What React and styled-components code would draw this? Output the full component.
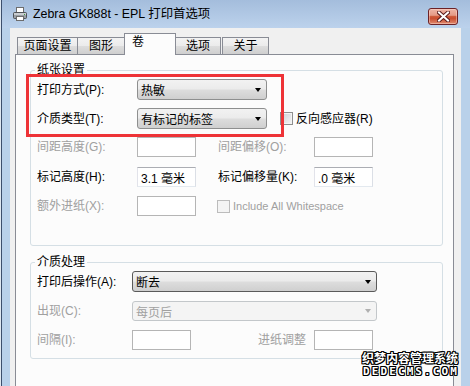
import React from "react";
import styled, { createGlobalStyle, css } from "styled-components";

const Global = createGlobalStyle`
  html, body { margin: 0; padding: 0; background: #ffffff; }
  body { font-family: "Liberation Sans", "Noto Sans CJK SC", sans-serif; font-size: 12px; }
  * { box-sizing: border-box; }
`;

const PANEL_BG = "#fcfcfc";
const FONT = `"Liberation Sans", "Noto Sans CJK SC", sans-serif`;

const Window = styled.div`
  position: relative;
  width: 470px;
  height: 386px;
  padding-left: 1px;
  background: #dfe8f2;
  overflow: hidden;
`;

const Frame = styled.div`
  height: 100%;
  border-left: 1px solid #3d4f6c;
  display: flex;
  flex-direction: column;
  background: linear-gradient(to bottom, #a4bddc 0px, #bcd2ec 28px, #b9d1ea 28px, #b9d1ea 100%);
`;

const TitleBar = styled.div`
  height: 28px;
  flex: none;
  display: flex;
  align-items: center;
  padding-left: 10px;
`;

const TitleText = styled.span`
  margin-left: 5px;
  font-family: ${FONT};
  font-size: 12.4px;
  color: #000;
  line-height: 16px;
`;

const CloseButton = styled.div`
  margin-left: auto;
  margin-right: 12px;
  align-self: flex-start;
  margin-top: 8px;
  width: 30px;
  height: 17px;
  border: 1px solid #6c2227;
  border-radius: 3px;
  background: linear-gradient(
    to bottom,
    #eeb5a6 0%,
    #e59a86 42%,
    #cf5b3b 50%,
    #c94d2f 62%,
    #df8a6f 100%
  );
  display: flex;
  align-items: center;
  justify-content: center;
  box-shadow: inset 0 0 0 1px rgba(255, 220, 210, 0.45);
`;

const Client = styled.div`
  flex: 1;
  margin: 0 9px 0 8px;
  background: #f0f0f0;
  padding: 5px 7px 0 5px;
  display: flex;
  flex-direction: column;
  min-height: 0;
  overflow: hidden;
`;

const TabRow = styled.div`
  height: 22px;
  flex: none;
  display: flex;
  align-items: flex-end;
  padding-left: 2px;
  margin-bottom: -1px;
  position: relative;
  z-index: 1;
`;

const Tab = styled.div`
  flex: none;
  width: ${(p) => p.$w}px;
  margin-left: ${(p) => p.$ml || 0}px;
  font-family: ${FONT};
  font-size: 12px;
  color: #000;
  text-align: center;
  border: 1px solid #898c95;
  border-bottom: none;
  ${(p) =>
    p.$active
      ? css`
          height: 22px;
          background: ${PANEL_BG};
          line-height: 17px;
          position: relative;
          z-index: 2;
          text-align: left;
          padding-left: 7px;
        `
      : css`
          height: 17px;
          margin-bottom: 1px;
          line-height: 17px;
          background: linear-gradient(to bottom, #f3f3f3 0%, #ebebeb 50%, #dddddd 51%, #cfcfcf 100%);
        `}
`;

const Panel = styled.div`
  flex: 1;
  background: ${PANEL_BG};
  border: 1px solid #898c95;
  border-bottom: none;
  padding: 15px 10px 0 14px;
`;

const Group = styled.div`
  position: relative;
  border: 1px solid #d5dfe5;
  border-radius: 3px;
  padding: ${(p) => p.$pad};
  margin-top: ${(p) => p.$mt || 0}px;
`;

const Caption = styled.span`
  position: absolute;
  top: -8px;
  left: 4px;
  padding: 0 2px;
  background: ${PANEL_BG};
  font-family: ${FONT};
  font-size: 12px;
  line-height: 14px;
  color: #000;
`;

const Highlight = styled.div`
  position: absolute;
  left: -5px;
  top: 3px;
  width: 258px;
  height: 63px;
  border: 3px solid #ee3337;
  z-index: 3;
  pointer-events: none;
`;

const Row = styled.div`
  display: flex;
  align-items: center;
  height: ${(p) => p.$h}px;
  margin-top: ${(p) => p.$mt || 0}px;
`;

const Label = styled.span`
  flex: none;
  width: ${(p) => p.$w}px;
  margin-left: ${(p) => p.$ml || 0}px;
  margin-right: ${(p) => p.$mr || 0}px;
  text-align: ${(p) => (p.$right ? "right" : "left")};
  font-family: ${FONT};
  font-size: 12px;
  line-height: 14px;
  white-space: nowrap;
  color: ${(p) => (p.$disabled ? "#a0a0a0" : "#000")};
`;

const Select = styled.div`
  position: relative;
  flex: none;
  width: ${(p) => p.$w}px;
  height: ${(p) => p.$h}px;
  border-radius: 3px;
  padding-left: 3px;
  display: flex;
  align-items: center;
  font-family: ${FONT};
  font-size: 12px;
  ${(p) =>
    p.$disabled
      ? css`
          border: 1px solid #c3c7ca;
          background: #f4f4f4;
          color: #a0a0a0;
        `
      : css`
          border: 1px solid ${p.$focus ? "#5a5a5a" : "#8e8f8f"};
          background: linear-gradient(to bottom, #f2f2f2 0%, #ebebeb 48%, #dddddd 52%, #cfcfcf 100%);
          color: #000;
        `}
  &::after {
    content: "";
    position: absolute;
    right: 5px;
    top: 50%;
    margin-top: -2px;
    border-left: 3.5px solid transparent;
    border-right: 3.5px solid transparent;
    border-top: 4px solid ${(p) => (p.$disabled ? "#b0b0b0" : "#000")};
  }
`;

const Input = styled.div`
  flex: none;
  width: 59px;
  height: 20px;
  padding-left: 3px;
  display: flex;
  align-items: center;
  font-family: ${FONT};
  font-size: 12px;
  color: #000;
  background: #fff;
  border: 1px solid;
  ${(p) =>
    p.$disabled
      ? css`
          border-color: #b5b5b5;
        `
      : css`
          border-color: #abadb3 #dbdfe6 #e3e9ef #e2e3ea;
        `}
`;

const Check = styled.span`
  flex: none;
  width: 13px;
  height: 13px;
  margin-left: ${(p) => p.$ml}px;
  margin-right: 3px;
  border: 1px solid ${(p) => (p.$disabled ? "#bcbcbc" : "#8e8f8f")};
  background: ${(p) =>
    p.$disabled
      ? "#f4f4f4"
      : "linear-gradient(135deg, #cbcfd5 0%, #f6f6f6 100%)"};
  box-shadow: inset 0 0 0 1px #f4f4f4;
`;

const LatinLabel = styled.span`
  font-family: "Liberation Sans", sans-serif;
  font-size: 11px;
  color: #a0a0a0;
  white-space: nowrap;
`;

const Watermark = styled.div`
  position: absolute;
  left: 360px;
  top: 351px;
  width: 100px;
  display: flex;
  flex-direction: column;
  align-items: center;
  color: #fff;
  font-weight: bold;
  text-shadow: -1px 0 #000, 1px 0 #000, 0 -1px #000, 0 1px #000, -1px -1px #000, 1px 1px #000, -1px 1px #000, 1px -1px #000;
  z-index: 5;
`;

const WaterCn = styled.span`
  font-family: "Noto Sans CJK SC", sans-serif;
  font-size: 12px;
  line-height: 14px;
`;

const WaterEn = styled.span`
  margin-top: 2px;
  font-family: "DejaVu Sans Mono", monospace;
  font-size: 11px;
  line-height: 10px;
  letter-spacing: 2.1px;
  margin-left: 2px;
`;

const PrinterIcon = () => (
  <svg width="16" height="16" viewBox="0 0 16 16">
    <rect x="4.5" y="1.5" width="7" height="5" fill="#fff" stroke="#6d6d6d" />
    <rect x="1.5" y="6.5" width="13" height="6" rx="1" fill="#9aa0a6" stroke="#4f5358" />
    <rect x="2" y="7" width="12" height="2" fill="#c9cdd1" />
    <rect x="4.5" y="10.5" width="7" height="4" fill="#fff" stroke="#6d6d6d" />
    <rect x="12" y="8" width="1" height="1" fill="#3f9b3f" />
  </svg>
);

const CloseGlyph = () => (
  <svg width="13" height="11" viewBox="0 0 13 11">
    <path d="M2 1.5 L11 9.5 M11 1.5 L2 9.5" stroke="#5b1c1c" strokeWidth="4" strokeLinecap="square" />
    <path d="M2 1.5 L11 9.5 M11 1.5 L2 9.5" stroke="#ffffff" strokeWidth="2" strokeLinecap="square" />
  </svg>
);

export default function App() {
  return (
    <>
      <Global />
      <Window>
        <Frame>
          <TitleBar>
            <PrinterIcon />
            <TitleText>Zebra GK888t - EPL 打印首选项</TitleText>
            <CloseButton>
              <CloseGlyph />
            </CloseButton>
          </TitleBar>
          <Client>
            <TabRow>
              <Tab $w={61}>页面设置</Tab>
              <Tab $w={48} $ml={-1}>图形</Tab>
              <Tab $w={52} $ml={-1} $active>卷</Tab>
              <Tab $w={46} $ml={-1}>选项</Tab>
              <Tab $w={47} $ml={1}>关于</Tab>
            </TabRow>
            <Panel>
              <Group $pad="8px 6px 29px 6px">
                <Caption>纸张设置</Caption>
                <Highlight />
                <Row $h={21}>
                  <Label $w={100}>打印方式(P):</Label>
                  <Select $w={130} $h={21}>热敏</Select>
                </Row>
                <Row $h={21} $mt={8}>
                  <Label $w={100}>介质类型(T):</Label>
                  <Select $w={130} $h={21}>有标记的标签</Select>
                  <Check $ml={13} />
                  <Label $w={90}>反向感应器(R)</Label>
                </Row>
                <Row $h={20} $mt={8}>
                  <Label $w={100} $disabled>间距高度(G):</Label>
                  <Input $disabled />
                  <Label $w={96} $ml={22} $disabled>间距偏移(O):</Label>
                  <Input $disabled />
                </Row>
                <Row $h={20} $mt={10}>
                  <Label $w={100}>标记高度(H):</Label>
                  <Input>3.1 毫米</Input>
                  <Label $w={96} $ml={22}>标记偏移量(K):</Label>
                  <Input>.0 毫米</Input>
                </Row>
                <Row $h={20} $mt={9}>
                  <Label $w={100} $disabled>额外进纸(X):</Label>
                  <Input $disabled />
                  <Check $ml={21} $disabled />
                  <LatinLabel>Include All Whitespace</LatinLabel>
                </Row>
              </Group>
              <Group $pad="8px 6px 8px 6px" $mt={16}>
                <Caption>介质处理</Caption>
                <Row $h={21}>
                  <Label $w={95}>打印后操作(A):</Label>
                  <Select $w={245} $h={21} $focus>断去</Select>
                </Row>
                <Row $h={20} $mt={9}>
                  <Label $w={95} $disabled>出现(C):</Label>
                  <Select $w={245} $h={20} $disabled>每页后</Select>
                </Row>
                <Row $h={20} $mt={9}>
                  <Label $w={95} $disabled>间隔(I):</Label>
                  <Input $disabled />
                  <Label $w={115} $mr={8} $right $disabled>进纸调整</Label>
                  <Input $disabled />
                </Row>
              </Group>
            </Panel>
          </Client>
        </Frame>
        <Watermark>
          <WaterCn>织梦内容管理系统</WaterCn>
          <WaterEn>DEDECMS.COM</WaterEn>
        </Watermark>
      </Window>
    </>
  );
}
